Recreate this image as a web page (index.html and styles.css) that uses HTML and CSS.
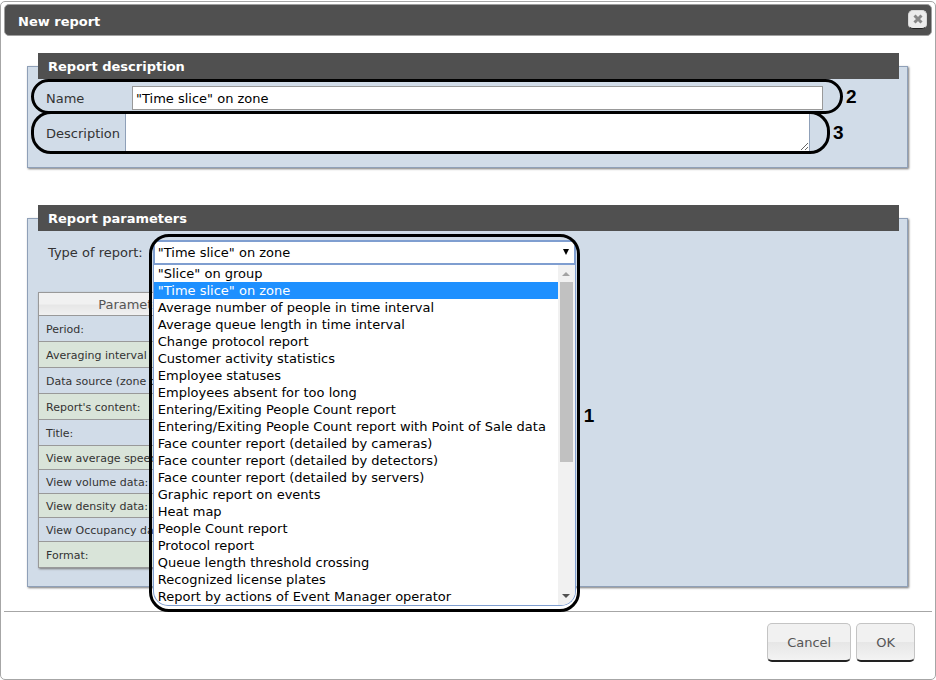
FILE: index.html
```html
<!DOCTYPE html>
<html lang="en">
<head>
    <meta charset="UTF-8">
    <meta name="viewport" content="width=device-width, initial-scale=1.0">
    <title>New report</title>
    <link rel="stylesheet" href="styles.css">
</head>
<body>
    <form class="dialog">
        <header class="titlebar">
            <h1>New report</h1>
            <button type="button" class="close" aria-label="Close">
                <svg viewBox="0 0 10 10" width="10" height="10"><path d="M1.5 1.5L8.5 8.5M8.5 1.5L1.5 8.5"/></svg>
            </button>
        </header>

        <div class="content">
            <fieldset class="panel">
                <legend>Report description</legend>
                <div class="field name-field">
                    <label for="name">Name</label>
                    <input type="text" id="name" value="&quot;Time slice&quot; on zone">
                    <span class="number">2</span>
                </div>
                <div class="field description-field">
                    <label for="description">Description</label>
                    <textarea id="description"></textarea>
                    <span class="number">3</span>
                </div>
            </fieldset>

            <fieldset class="panel">
                <legend>Report parameters</legend>
                <div class="type-row">
                    <label for="type">Type of report:</label>
                    <div class="picker-slot">
                        <div class="picker">
                            <select id="type">
                                <option>"Time slice" on zone</option>
                            </select>
                            <svg class="arrow" viewBox="0 0 6 6" width="6" height="6"><path d="M0 0H6L3 6Z"/></svg>
                            <div class="menu">
                                <ul role="listbox" aria-label="Type of report">
                                    <li role="option">"Slice" on group</li>
                                    <li role="option" aria-selected="true" class="selected">"Time slice" on zone</li>
                                    <li role="option">Average number of people in time interval</li>
                                    <li role="option">Average queue length in time interval</li>
                                    <li role="option">Change protocol report</li>
                                    <li role="option">Customer activity statistics</li>
                                    <li role="option">Employee statuses</li>
                                    <li role="option">Employees absent for too long</li>
                                    <li role="option">Entering/Exiting People Count report</li>
                                    <li role="option">Entering/Exiting People Count report with Point of Sale data</li>
                                    <li role="option">Face counter report (detailed by cameras)</li>
                                    <li role="option">Face counter report (detailed by detectors)</li>
                                    <li role="option">Face counter report (detailed by servers)</li>
                                    <li role="option">Graphic report on events</li>
                                    <li role="option">Heat map</li>
                                    <li role="option">People Count report</li>
                                    <li role="option">Protocol report</li>
                                    <li role="option">Queue length threshold crossing</li>
                                    <li role="option">Recognized license plates</li>
                                    <li role="option">Report by actions of Event Manager operator</li>
                                </ul>
                                <div class="scrollbar">
                                    <svg class="up" viewBox="0 0 8 4" width="8" height="4"><path d="M0 4L4 0L8 4Z"/></svg>
                                    <div class="thumb"></div>
                                    <svg class="down" viewBox="0 0 8 4" width="8" height="4"><path d="M0 0H8L4 4Z"/></svg>
                                </div>
                            </div>
                            <span class="number">1</span>
                        </div>
                    </div>
                </div>

                <table class="params">
                    <thead>
                        <tr><th>Parameter</th></tr>
                    </thead>
                    <tbody>
                        <tr><td>Period:</td></tr>
                        <tr><td>Averaging interval</td></tr>
                        <tr><td>Data source (zone or</td></tr>
                        <tr><td>Report's content:</td></tr>
                        <tr><td>Title:</td></tr>
                        <tr class="check"><td>View average speed</td></tr>
                        <tr class="check"><td>View volume data:</td></tr>
                        <tr class="check"><td>View density data:</td></tr>
                        <tr class="check"><td>View Occupancy data</td></tr>
                        <tr><td>Format:</td></tr>
                    </tbody>
                </table>
            </fieldset>
        </div>

        <footer class="buttons">
            <button type="button">Cancel</button>
            <button type="submit">OK</button>
        </footer>
    </form>
</body>
</html>
```

FILE: styles.css
```css
* {
    box-sizing: border-box;
}
body {
    margin: 0;
    padding-top: 1px;
    background-color: white;
    font-family: Verdana, 'DejaVu Sans', sans-serif;
    font-size: 13px;
    color: #333;
}
input, select, textarea, button {
    font-family: inherit;
    font-size: 13px;
}
.dialog {
    border: 1px solid #a6a6a6;
    border-radius: 5px;
    padding: 2px 3px 17px;
}

/* title bar */
.titlebar {
    display: flex;
    align-items: center;
    justify-content: space-between;
    height: 32px;
    padding: 0 4px 0 13px;
    background-color: #505050;
    border: 1px solid #a0a0a0;
    border-radius: 5px;
}
.titlebar h1 {
    margin: 0;
    padding-top: 2px;
    font-size: 13px;
    color: white;
}
.close {
    display: flex;
    align-items: center;
    justify-content: center;
    width: 19px;
    height: 19px;
    margin-bottom: 2px;
    padding: 0;
    border: 1px solid #d8d8d8;
    border-bottom-color: #222;
    border-radius: 5px;
    background-color: #ececec;
}
.close path {
    stroke: #888;
    stroke-width: 3;
}

/* panels */
.content {
    display: flex;
    flex-direction: column;
    gap: 37px;
    padding: 17px 24px 24px 23px;
}
.panel {
    min-width: 0;
    margin: 0;
    padding: 0 8px 13px 10px;
    background-color: #d1dce8;
    border: 1px solid #8fa0b8;
    box-shadow: 1px 1px 2px #777;
}
.panel legend {
    width: 100%;
    height: 26px;
    padding: 1px 10px 0;
    background-color: #505050;
    color: white;
    font-weight: bold;
    line-height: 25px;
}

/* outlined rows */
.field {
    position: relative;
    display: flex;
    align-items: center;
    margin-left: -7px;
    border: 3px solid black;
    border-radius: 20px;
}
.name-field {
    height: 35px;
    margin-right: 56px;
    padding: 3px 17px 0 12px;
}
.name-field label {
    width: 86px;
}
.name-field input {
    flex: 1;
    min-width: 0;
    height: 24px;
    padding: 0 3px;
    border: 1px solid #999;
    background-color: white;
    color: black;
}
.description-field {
    height: 43px;
    margin-top: -3px;
    margin-right: 69px;
    padding: 0 17px 0 12px;
}
.description-field label {
    width: 79px;
    padding-top: 2px;
}
.description-field textarea {
    flex: 1;
    align-self: stretch;
    min-width: 0;
    border: 1px solid #8fa0b8;
    border-width: 0 1px;
    background-color: white;
}
.number {
    position: absolute;
    top: 50%;
    left: 100%;
    margin-left: 6px;
    transform: translateY(-50%);
    font-family: 'Liberation Sans', Arial, sans-serif;
    font-size: 19px;
    font-weight: bold;
    line-height: 20px;
    color: black;
}

/* report type */
.type-row {
    display: flex;
    align-items: center;
    gap: 10px;
    padding: 9px 0 27px 10px;
}
.picker-slot {
    position: relative;
    width: 423px;
    height: 25px;
}
.picker {
    position: absolute;
    top: 0;
    left: 0;
    z-index: 1;
    width: 100%;
}
.picker::after {
    content: "";
    position: absolute;
    inset: -6px -4px;
    border: 3px solid black;
    border-radius: 20px;
    pointer-events: none;
}
.picker select {
    display: block;
    appearance: none;
    width: 100%;
    height: 25px;
    padding: 0 3px;
    border: 2px solid #7f9ed0;
    border-radius: 5px 2px 0 0;
    outline: none;
    background-color: white;
    color: black;
}
.arrow {
    position: absolute;
    top: 9px;
    right: 7px;
}
.menu {
    display: flex;
    border: 1px solid #7f9ed0;
    border-top: 0;
    border-radius: 0 0 15px 15px;
    overflow: hidden;
    background-color: white;
    color: black;
}
.menu ul {
    flex: 1;
    margin: 0;
    padding: 0;
    list-style: none;
}
.menu li {
    height: 17px;
    padding-left: 4px;
    line-height: 17px;
    white-space: nowrap;
}
.menu .selected {
    background-color: #1e90ff;
    color: white;
}
.scrollbar {
    display: flex;
    flex-direction: column;
    align-items: center;
    width: 17px;
    padding: 7px 2px;
    background-color: #f1f1f1;
}
.thumb {
    width: 13px;
    height: 180px;
    margin: 6px 0 auto;
    background-color: #c1c1c1;
}
.up {
    fill: #a3a3a3;
}
.down {
    fill: #505050;
}
.picker .number {
    top: 48%;
    margin-left: 8px;
}

/* parameters table */
.params {
    width: 188px;
    margin-bottom: 5px;
    border: 1px solid #999;
    border-collapse: collapse;
    box-shadow: 1px 1px 2px #777;
}
.params th {
    height: 23px;
    padding: 0;
    background-image: linear-gradient(#f1f1f1 50%, #e6e6e6 50%, #f1f1f1);
    font-size: 13px;
    font-weight: normal;
    color: #555;
}
.params td {
    height: 26px;
    padding: 1px 7px 0;
    border-top: 1px solid #999;
    font-size: 11px;
    white-space: nowrap;
}
.params .check td {
    height: 24px;
}
.params tbody tr:nth-child(even) {
    background-color: #d9e4d9;
}

/* bottom buttons */
.buttons {
    display: flex;
    justify-content: flex-end;
    gap: 5px;
    padding: 11px 17px 0;
    border-top: 1px solid #a6a6a6;
}
.buttons button {
    height: 39px;
    padding: 0 19px;
    border: 1px solid #c4c4c4;
    border-bottom: 2px solid #222;
    border-radius: 5px;
    background-image: linear-gradient(#f1f1f1 50%, #e6e6e6 50%, #f3f3f3);
    color: #555;
}
```
